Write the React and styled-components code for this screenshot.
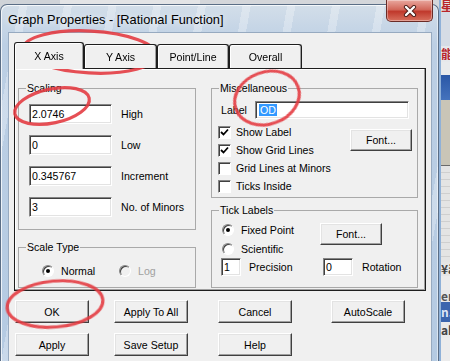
import React from 'react'
import styled, { createGlobalStyle } from 'styled-components'

const GlobalStyle = createGlobalStyle`
  html, body {
    margin: 0;
    padding: 0;
  }
  body {
    font-family: "Liberation Sans", Arial, sans-serif;
    background: #dde2e8;
  }
`

const Page = styled.div`
  position: relative;
  width: 450px;
  height: 361px;
  overflow: hidden;
  display: flex;
  background: linear-gradient(90deg, #cfd3d8 0 60px, #e3e4e6 60px 200px, #d4d6da 200px);
`

const Window = styled.div`
  flex: none;
  width: 439px;
  height: 372px;
  margin-top: 4px;
  box-sizing: border-box;
  border: 1px solid #5b6e86;
  border-bottom: none;
  border-radius: 7px 7px 0 0;
  padding: 0 6px 0 7px;
  display: flex;
  flex-direction: column;
  background:
    repeating-linear-gradient(100deg, rgba(255,255,255,0) 0 18px, rgba(255,255,255,.28) 18px 26px, rgba(255,255,255,0) 26px 44px),
    linear-gradient(#d3dee9, #bccfe4 40px, #b4cae2);
  box-shadow: inset 1px 1px 0 rgba(255,255,255,.75), inset -1px 0 0 rgba(255,255,255,.5);
`

const TitleBar = styled.div`
  height: 27px;
  display: flex;
  align-items: center;
  margin-right: -1px;
`

const Title = styled.div`
  flex: 1;
  font-size: 12.8px;
  color: #000;
  padding-top: 1px;
  text-shadow: 0 0 6px rgba(255,255,255,.9);
`

const CloseButton = styled.div`
  align-self: flex-start;
  margin-top: -5px;
  width: 47px;
  height: 22px;
  box-sizing: border-box;
  border: 1px solid #6a2c27;
  border-top: none;
  border-radius: 0 0 5px 5px;
  display: flex;
  align-items: center;
  justify-content: center;
  background: linear-gradient(#e9a89f, #d2685b 45%, #c0392c 55%, #d8705e);
  box-shadow: inset 0 0 0 1px rgba(255,255,255,.35);
`

const Client = styled.div`
  flex: 1;
  background: #f0f0f0;
  border: 1px solid #97aac0;
  border-bottom: none;
  padding: 9px 0 0 5px;
`

const TabStrip = styled.div`
  position: relative;
  z-index: 1;
  display: flex;
  align-items: flex-end;
  height: 26px;
`

const Tab = styled.div`
  width: ${p => p.$w}px;
  height: ${p => (p.$active ? 27 : 24)}px;
  margin-bottom: ${p => (p.$active ? -1 : 0)}px;
  box-sizing: border-box;
  border: 1px solid #1e1e1e;
  border-bottom: none;
  border-radius: 3px 3px 0 0;
  background: #f0f0f0;
  box-shadow: inset -1px 0 0 #a0a0a0, inset 1px 1px 0 #fff;
  display: flex;
  align-items: center;
  justify-content: center;
  font-size: 10.6px;
  color: #000;
`

const Panel = styled.div`
  width: 412px;
  height: 223px;
  box-sizing: border-box;
  border: 1px solid #1e1e1e;
  box-shadow: inset -1px -1px 0 #a0a0a0, inset 1px 1px 0 #fff;
  padding: 13px 0 0 3px;
  display: grid;
  grid-template-columns: 178px 207px;
  column-gap: 15px;
  align-content: start;
`

const Column = styled.div`
  display: flex;
  flex-direction: column;
  gap: ${p => p.$gap}px;
`

const Group = styled.fieldset`
  margin: 0;
  padding: 0;
  min-width: 0;
  height: ${p => p.$h}px;
  box-sizing: border-box;
  border: 1px solid #a9a9a9;
`

const Legend = styled.legend`
  margin-left: 7px;
  padding: 0 1px;
  font-size: 10.6px;
  line-height: 13px;
  color: #000;
`

const ScalingBody = styled.div`
  padding: 9px 0 0 10px;
  display: flex;
  flex-direction: column;
  gap: 11px;
`

const FieldRow = styled.div`
  display: flex;
  align-items: center;
  gap: ${p => p.$gap || 9}px;
  margin-left: ${p => p.$indent || 0}px;
`

const Field = styled.div`
  width: ${p => p.$w}px;
  height: ${p => p.$h || 20}px;
  box-sizing: border-box;
  border: 1px solid;
  border-color: #858585 #fff #fff #858585;
  box-shadow: inset 1px 1px 0 #404040, inset -1px -1px 0 #e3e3e3;
  background: #fff;
  padding: 0 0 0 2px;
  display: flex;
  align-items: center;
  font-size: 10.6px;
  color: #000;
  white-space: nowrap;
`

const Selected = styled.span`
  background: #3399ff;
  color: #fff;
  padding: 0 1px;
  margin-left: 1px;
`

const Text = styled.span`
  font-size: 10.6px;
  color: ${p => (p.$disabled ? '#a0a0a0' : '#000')};
  white-space: nowrap;
`

const ScaleBody = styled.div`
  padding: 8px 0 0 23px;
  display: grid;
  grid-template-columns: 77px auto;
`

const Option = styled.label`
  display: flex;
  align-items: center;
  gap: ${p => p.$gap || 7}px;
  height: ${p => p.$h || 18}px;
`

const Radio = styled.span`
  position: relative;
  flex: none;
  width: 12px;
  height: 12px;
  box-sizing: border-box;
  border-radius: 50%;
  border: 1px solid;
  border-color: #858585 #fff #fff #858585;
  box-shadow: inset 1px 1px 0 #404040;
  background: ${p => (p.$disabled ? '#f0f0f0' : '#fff')};
  &::after {
    content: '';
    display: ${p => (p.$checked ? 'block' : 'none')};
    position: absolute;
    left: 3px;
    top: 3px;
    width: 4px;
    height: 4px;
    border-radius: 50%;
    background: #000;
  }
`

const Check = styled.span`
  flex: none;
  width: 13px;
  height: 13px;
  box-sizing: border-box;
  border: 1px solid;
  border-color: #858585 #fff #fff #858585;
  box-shadow: inset 1px 1px 0 #404040;
  background: #fff;
  display: flex;
  align-items: center;
  justify-content: center;
`

const MiscBody = styled.div`
  padding: 6px 0 0 6px;
`

const LabelRow = styled.div`
  display: grid;
  grid-template-columns: 34px auto;
  align-items: center;
  margin-left: 3px;
`

const MiscGrid = styled.div`
  margin-top: 4px;
  display: grid;
  grid-template-columns: 1fr auto;
  align-items: start;
`

const Button = styled.div`
  width: ${p => p.$w || 74}px;
  height: ${p => p.$h || 23}px;
  margin: ${p => p.$m || '0'};
  box-sizing: border-box;
  border: 1px solid;
  border-color: #fff #404040 #404040 #fff;
  box-shadow: inset -1px -1px 0 #a0a0a0, inset 1px 1px 0 #e3e3e3;
  background: #f0f0f0;
  display: flex;
  align-items: center;
  justify-content: center;
  font-size: 10.6px;
  color: #000;
`

const TickBody = styled.div`
  padding: 3px 0 0 10px;
  display: grid;
  grid-template-columns: 98px 1fr;
  grid-template-rows: 19px 19px auto;
`

const TickFont = styled.div`
  grid-column: 2;
  grid-row: 1 / span 2;
  padding-top: 3px;
`

const ButtonGrid = styled.div`
  margin-top: 9px;
  padding-left: 1px;
  display: grid;
  grid-template-columns: 99px 104px 113px 74px;
  row-gap: 10px;
`

const Backdrop = styled.div`
  flex: 1;
  display: flex;
  flex-direction: column;
  overflow: hidden;
  border-left: 2px solid #8fb1d8;
`

const Smear = styled.div`
  flex: none;
  height: ${p => p.$h}px;
  background: ${p => p.$bg};
  color: ${p => p.$fg || '#333'};
  font-family: "Noto Sans CJK SC", "Liberation Serif", serif;
  font-size: 12px;
  font-weight: bold;
  line-height: ${p => p.$h}px;
  white-space: nowrap;
  overflow: hidden;
`

const Marks = styled.svg`
  position: absolute;
  left: 0;
  top: 0;
  pointer-events: none;
`

const CheckMark = () => (
  <svg width="9" height="9" viewBox="0 0 9 9">
    <path d="M1 4 L3.5 6.5 L8 1.5" fill="none" stroke="#000" strokeWidth="1.8" />
  </svg>
)

const CloseGlyph = () => (
  <svg width="14" height="12" viewBox="0 0 14 12">
    <path d="M3 2 L11 10 M11 2 L3 10" stroke="#4a1c18" strokeWidth="4.2" strokeLinecap="round" />
    <path d="M3 2 L11 10 M11 2 L3 10" stroke="#fff" strokeWidth="2.4" strokeLinecap="round" />
  </svg>
)

const tabs = [
  { label: 'X Axis', w: 70, active: true },
  { label: 'Y Axis', w: 73 },
  { label: 'Point/Line', w: 72 },
  { label: 'Overall', w: 73 },
]

const scaling = [
  { value: '2.0746', label: 'High' },
  { value: '0', label: 'Low' },
  { value: '0.345767', label: 'Increment' },
  { value: '3', label: 'No. of Minors' },
]

const checks = [
  { label: 'Show Label', on: true },
  { label: 'Show Grid Lines', on: true },
  { label: 'Grid Lines at Minors' },
  { label: 'Ticks Inside' },
]

const App = () => {
  return <Page>
    <GlobalStyle />
    <Window>
      <TitleBar>
        <Title>Graph Properties - [Rational Function]</Title>
        <CloseButton><CloseGlyph /></CloseButton>
      </TitleBar>
      <Client>
        <TabStrip>
          {tabs.map(t => <Tab key={t.label} $w={t.w} $active={t.active}>{t.label}</Tab>)}
        </TabStrip>
        <Panel>
          <Column $gap={11}>
            <Group $h={148}>
              <Legend>Scaling</Legend>
              <ScalingBody>
                {scaling.map(s => <FieldRow key={s.label}>
                  <Field $w={83}>{s.value}</Field>
                  <Text>{s.label}</Text>
                </FieldRow>)}
              </ScalingBody>
            </Group>
            <Group $h={47}>
              <Legend>Scale Type</Legend>
              <ScaleBody>
                <Option><Radio $checked /><Text>Normal</Text></Option>
                <Option><Radio $disabled /><Text $disabled>Log</Text></Option>
              </ScaleBody>
            </Group>
          </Column>
          <Column $gap={6}>
            <Group $h={116}>
              <Legend>Miscellaneous</Legend>
              <MiscBody>
                <LabelRow>
                  <Text>Label</Text>
                  <Field $w={154} $h={18}><Selected>OD</Selected></Field>
                </LabelRow>
                <MiscGrid>
                  <div>
                    {checks.map(c => <Option key={c.label} $gap={5}>
                      <Check>{c.on && <CheckMark />}</Check>
                      <Text>{c.label}</Text>
                    </Option>)}
                  </div>
                  <Button $w={62} $h={22} $m="6px 5px 0 0">Font...</Button>
                </MiscGrid>
              </MiscBody>
            </Group>
            <Group $h={84}>
              <Legend>Tick Labels</Legend>
              <TickBody>
                <Option $h={19}><Radio $checked /><Text>Fixed Point</Text></Option>
                <TickFont><Button $w={62} $h={22}>Font...</Button></TickFont>
                <Option $h={19}><Radio /><Text>Scientific</Text></Option>
                <FieldRow $gap={8} $indent={-1}>
                  <Field $w={20} $h={18}>1</Field>
                  <Text>Precision</Text>
                </FieldRow>
                <FieldRow $indent={3}>
                  <Field $w={30} $h={18}>0</Field>
                  <Text>Rotation</Text>
                </FieldRow>
              </TickBody>
            </Group>
          </Column>
        </Panel>
        <ButtonGrid>
          <Button>OK</Button>
          <Button>Apply To All</Button>
          <Button>Cancel</Button>
          <Button>AutoScale</Button>
          <Button>Apply</Button>
          <Button>Save Setup</Button>
          <Button>Help</Button>
        </ButtonGrid>
      </Client>
    </Window>
    <Backdrop>
      <Smear $h={12} $bg="#e4e4e4" $fg="#b8252b">星</Smear>
      <Smear $h={34} $bg="#d5dce5" />
      <Smear $h={16} $bg="#e6e8eb" $fg="#b8252b">能</Smear>
      <Smear $h={13} $bg="#e8eaec" />
      <Smear $h={25} $bg="linear-gradient(#2a57a6, #4573bd)" />
      <Smear $h={65} $bg="#c9c5b7" />
      <Smear $h={1} $bg="#6b6b6b" />
      <Smear $h={96} $bg="repeating-linear-gradient(#e4e4e4 0 6px, #cfcfcf 6px 7px)" />
      <Smear $h={14} $bg="#e6e6e6" $fg="#444">¥ä</Smear>
      <Smear $h={14} $bg="#ececec" />
      <Smear $h={12} $bg="#e8e8e8" $fg="#555">er</Smear>
      <Smear $h={20} $bg="#3b65ae" $fg="#dfe8f7">n.</Smear>
      <Smear $h={16} $bg="#eaeaea" $fg="#444">ab</Smear>
      <Smear $h={30} $bg="#ececec" />
    </Backdrop>
    <Marks width="450" height="361" viewBox="0 0 450 361">
      <g fill="none" stroke="#e43c42" strokeWidth="3.2" opacity="0.9">
        <ellipse cx="90" cy="52" rx="67" ry="21" transform="rotate(3 90 52)" />
        <ellipse cx="52" cy="106" rx="38" ry="17" transform="rotate(-12 52 106)" />
        <ellipse cx="267" cy="98" rx="33" ry="26" transform="rotate(-20 267 98)" />
        <ellipse cx="55" cy="304" rx="48" ry="23" transform="rotate(-5 55 304)" />
      </g>
    </Marks>
  </Page>
}

export default App
